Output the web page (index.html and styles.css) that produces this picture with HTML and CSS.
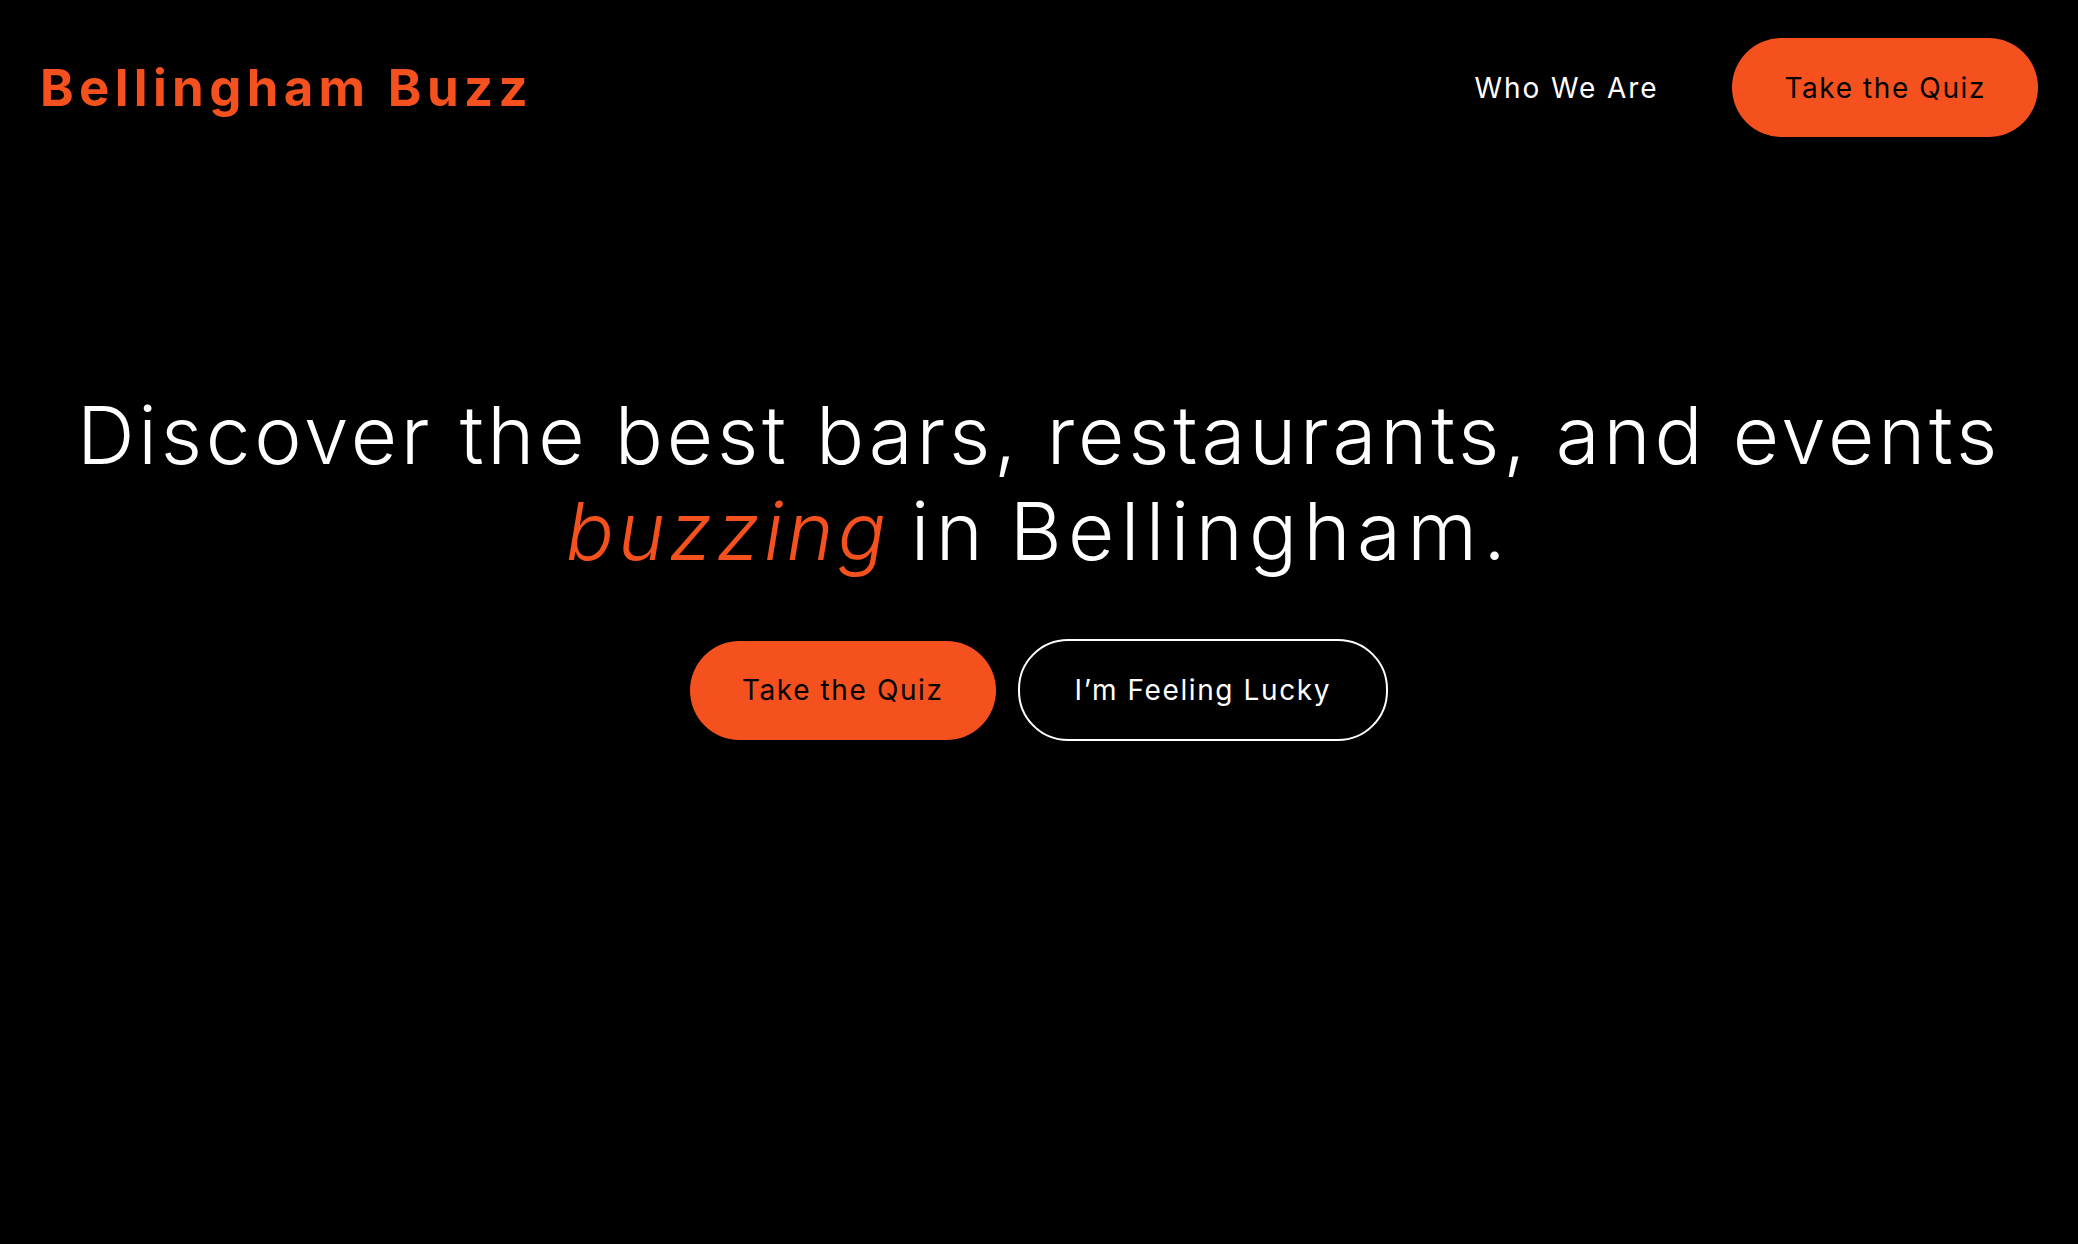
FILE: index.html
```html
<!DOCTYPE html>
<html lang="en">
<head>
<meta charset="utf-8">
<title>Bellingham Buzz</title>
<link rel="stylesheet" href="styles.css">
</head>
<body>
<header class="site-header">
  <a class="logo" href="#">Bellingham Buzz</a>
  <nav class="nav">
    <a class="nav-link" href="#">Who We Are</a>
    <a class="btn btn-primary" href="#">Take the Quiz</a>
  </nav>
</header>
<main class="hero">
  <h1 class="hero-title">Discover the best bars, restaurants, and events<br><span class="line-two"><em class="accent">buzzing</em> in Bellingham.</span></h1>
  <div class="hero-actions">
    <a class="btn btn-primary" href="#">Take the Quiz</a>
    <a class="btn btn-outline" href="#">I’m Feeling Lucky</a>
  </div>
</main>
</body>
</html>
```
FILE: styles.css
```css
* { box-sizing: border-box; }
html, body { margin: 0; padding: 0; }
body {
  background: #000;
  color: #fff;
  font-family: Inter, "Noto Sans", sans-serif;
  min-height: 100vh;
}
a { text-decoration: none; color: inherit; }

.site-header {
  display: flex;
  justify-content: space-between;
  align-items: center;
  padding: 38px 40px 0 40px;
}
.logo {
  color: #F4511E;
  font-weight: 700;
  font-size: 51px;
  line-height: 1;
  letter-spacing: 5.3px;
}
.nav {
  display: flex;
  align-items: center;
  gap: 74px;
}
.nav-link {
  font-size: 28px;
  font-weight: 400;
  letter-spacing: 1.9px;
  color: #fff;
}
.btn {
  display: inline-flex;
  align-items: center;
  justify-content: center;
  height: 99px;
  padding: 0 52px;
  border-radius: 50px;
  font-size: 28px;
  font-weight: 400;
  letter-spacing: 1.6px;
  white-space: nowrap;
}
.btn-primary {
  background: #F4511E;
  color: #000;
}
.btn-outline {
  height: 102px;
  padding: 0 55px;
  border: 2px solid #fff;
  color: #fff;
  background: transparent;
}

.hero {
  display: flex;
  flex-direction: column;
  align-items: center;
  padding-top: 250px;
}
.hero-title {
  margin: 0;
  text-align: center;
  font-weight: 300;
  font-size: 80px;
  line-height: 96px;
  letter-spacing: 3.8px;
  color: #fff;
}
.line-two {
  letter-spacing: 6.3px;
  word-spacing: -8px;
}
.accent {
  color: #F4511E;
  font-style: italic;
  font-weight: 300;
  letter-spacing: 4px;
}
.hero-actions {
  display: flex;
  align-items: center;
  gap: 22px;
  margin-top: 60px;
}
```
